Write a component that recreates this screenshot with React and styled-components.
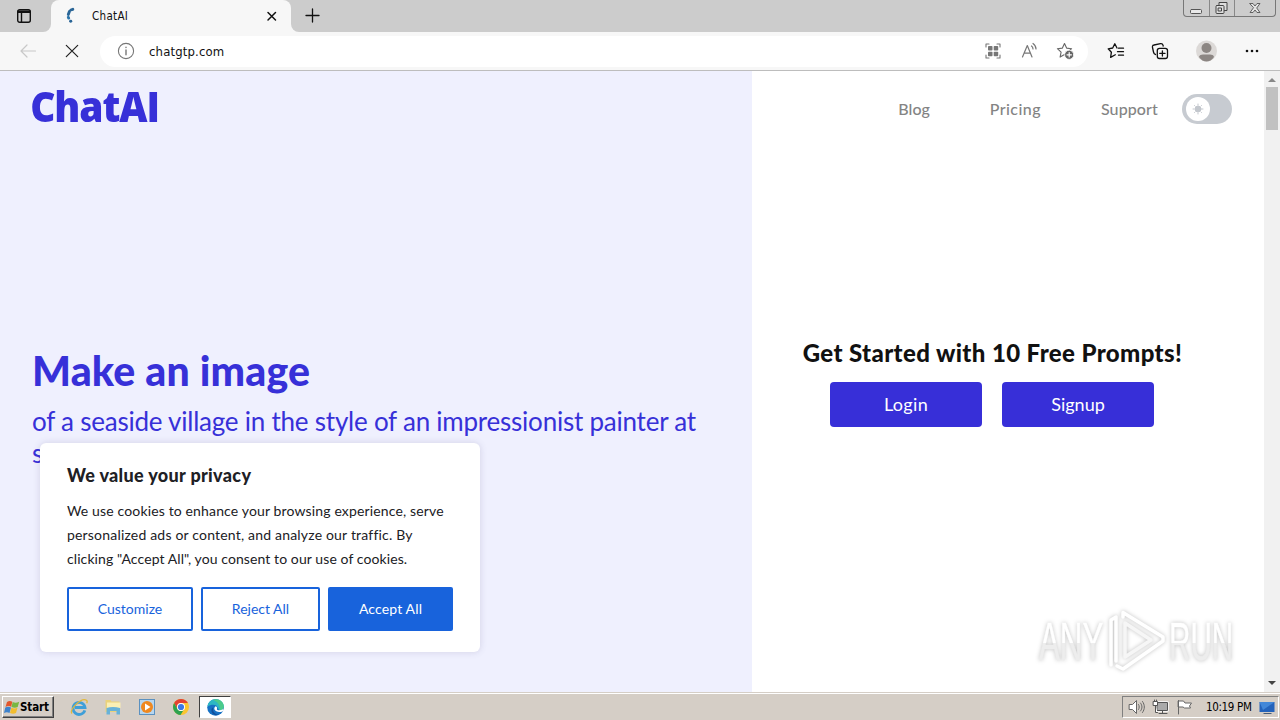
import React from "react";
import styled, { createGlobalStyle } from "styled-components";

const Global = createGlobalStyle`
  * { box-sizing: border-box; }
  html, body { margin: 0; padding: 0; overflow: hidden; }
  button { font: inherit; margin: 0; padding: 0; }
  svg { display: block; flex: none; }
`;

const ui = `"DejaVu Sans Condensed", "DejaVu Sans", sans-serif`;

const Screen = styled.div`
  width: 1280px;
  height: 720px;
  display: flex;
  flex-direction: column;
  font-family: Lato, sans-serif;
  background: #fff;
`;

const TabStrip = styled.header`
  height: 32px;
  flex: none;
  display: flex;
  align-items: stretch;
  background: #f7f7f7;
`;

const TabActions = styled.div`
  width: 51px;
  padding: 8px 0 0 16px;
  background: #cccccc;
  border-radius: 0 0 8px 0;
`;

const TabSlot = styled.div`
  width: 240px;
  background: linear-gradient(#ccc 50%, #f7f7f7 50%);
`;

const Tab = styled.div`
  height: 32px;
  display: flex;
  align-items: center;
  padding: 0 13px 0 15px;
  background: #f7f7f7;
  border-radius: 8px 8px 0 0;
  font: 11.5px ${ui};
  color: #111;
`;

const TabTitle = styled.span`
  flex: 1;
  margin-left: 12px;
  letter-spacing: 0.3px;
`;

const StripRest = styled.div`
  flex: 1;
  display: flex;
  align-items: flex-start;
  padding: 0 4px 0 14px;
  background: #cccccc;
  border-radius: 0 0 0 8px;
`;

const NewTab = styled.div`
  padding-top: 8px;
`;

const WindowControls = styled.div`
  margin-left: auto;
  height: 17px;
  display: flex;
  border: 1px solid #777;
  border-top: 0;
  border-radius: 0 0 4px 4px;
`;

const WindowButton = styled.div`
  width: ${(p) => p.$w}px;
  display: flex;
  align-items: center;
  justify-content: center;
  & + & { border-left: 1px solid #888; }
`;

const Toolbar = styled.div`
  height: 39px;
  flex: none;
  display: flex;
  align-items: center;
  padding: 0 20px 0 19px;
  background: #f7f7f7;
  border-bottom: 1px solid #bdbdbd;
`;

const NavIcons = styled.div`
  width: 81px;
  display: flex;
  gap: 26px;
`;

const AddressBar = styled.div`
  width: 988px;
  height: 31px;
  display: flex;
  align-items: center;
  padding: 0 14px 0 17px;
  border-radius: 16px;
  background: #fff;
  font: 13px ${ui};
  color: #111;
`;

const Address = styled.span`
  flex: 1;
  margin-left: 14px;
  letter-spacing: 0.15px;
`;

const AddressIcons = styled.div`
  display: flex;
  gap: 18px;
`;

const ToolbarIcons = styled.div`
  flex: 1;
  display: flex;
  align-items: center;
  justify-content: space-between;
  padding-left: 19px;
`;

const Viewport = styled.div`
  height: 621px;
  flex: none;
  display: flex;
`;

const Hero = styled.section`
  width: 752px;
  height: 621px;
  padding: 0 32px;
  background: #eff0fe;
  color: #3730d8;
  position: relative;
`;

const Logo = styled.div`
  padding-top: 11px;
  height: 274px;
  width: 200px;
  font: 800 43px/48px "Open Sans", sans-serif;
  letter-spacing: -1.2px;
  transform: scaleX(0.905);
  transform-origin: left top;
  text-indent: -2px;
`;

const HeroTitle = styled.h1`
  margin: 0;
  font-size: 41px;
  font-weight: 900;
  line-height: 52px;
  letter-spacing: 0.15px;
  white-space: nowrap;
`;

const HeroText = styled.p`
  margin: 8px 0 0;
  font-size: 26px;
  line-height: 32px;
  letter-spacing: -0.23px;
  white-space: nowrap;
`;

const Consent = styled.aside`
  position: absolute;
  left: 40px;
  top: 372px;
  width: 440px;
  height: 209px;
  padding: 19px 27px 21px;
  border-radius: 6px;
  background: #fff;
  box-shadow: 0 0 7px rgba(90, 80, 130, 0.2);
  color: #202024;
`;

const ConsentTitle = styled.h2`
  margin: 0 0 11px;
  font-size: 18px;
  line-height: 26px;
  font-weight: 900;
  letter-spacing: 0.33px;
  white-space: nowrap;
`;

const ConsentLine = styled.div`
  font-size: 14px;
  line-height: 24px;
  white-space: nowrap;
  letter-spacing: ${(p) => p.$track || "0"};
`;

const ConsentButtons = styled.div`
  display: flex;
  gap: 8px;
  margin-top: 16px;
`;

const ConsentButton = styled.button`
  width: ${(p) => p.$w}px;
  height: 44px;
  padding-bottom: 2px;
  border: 2px solid #1863dc;
  border-radius: 2px;
  background: ${(p) => (p.$primary ? "#1863dc" : "#fff")};
  color: ${(p) => (p.$primary ? "#fff" : "#1863dc")};
  font-size: 14px;
  letter-spacing: ${(p) => p.$track || "0"};
`;

const Panel = styled.section`
  width: 512px;
  display: flex;
  flex-direction: column;
`;

const SiteNav = styled.nav`
  height: 76px;
  display: flex;
  align-items: center;
  justify-content: flex-end;
  padding-right: 32px;
  font-size: 16px;
  font-weight: 500;
  color: #848484;
`;

const SiteLink = styled.a`
  margin-right: ${(p) => p.$gap}px;
  padding-bottom: 2px;
  letter-spacing: ${(p) => p.$track || "0"};
`;

const Toggle = styled.div`
  width: 50px;
  height: 30px;
  padding: 3px 4px;
  border-radius: 15px;
  background: #c7cbd1;
`;

const Knob = styled.div`
  width: 24px;
  height: 24px;
  display: grid;
  place-items: center;
  border-radius: 50%;
  background: #fff;
`;

const SignIn = styled.div`
  display: flex;
  flex-direction: column;
  align-items: center;
  padding: 190px 32px 0 0;
`;

const PanelTitle = styled.h2`
  margin: 0 0 13px;
  font-size: 24px;
  line-height: 32px;
  font-weight: 900;
  color: #111;
  white-space: nowrap;
  letter-spacing: 0.39px;
  padding-left: 1px;
`;

const PanelButtons = styled.div`
  display: flex;
  gap: 20px;
`;

const PanelButton = styled.button`
  width: 152px;
  height: 45px;
  padding-bottom: 1px;
  border: 0;
  border-radius: 4px;
  background: #372fd8;
  color: #fff;
  font-size: 18px;
  letter-spacing: ${(p) => p.$track || "0"};
`;

const Scrollbar = styled.div`
  width: 16px;
  display: flex;
  flex-direction: column;
  align-items: center;
  padding: 6px 0;
  background: #f1f1f1;
`;

const Thumb = styled.div`
  width: 12px;
  height: 43px;
  margin: 5px 1px auto 0;
  background: #c1c1c1;
`;

const Watermark = styled.div`
  position: absolute;
  left: 1039px;
  top: 606px;
  display: flex;
  align-items: center;
  color: #fff;
  font: 400 53px/68px "Liberation Sans", sans-serif;
  filter: drop-shadow(0 0 2px rgba(0, 0, 0, 0.25));
`;

const MarkWord = styled.span`
  width: ${(p) => p.$w}px;
  margin-right: ${(p) => p.$pull}px;
  padding-top: 2px;
  white-space: nowrap;
  transform: scaleX(${(p) => p.$scale});
  transform-origin: left center;
  background: linear-gradient(#fff 53%, #ededed 53%);
  background-clip: text;
  -webkit-text-stroke: 0.6px transparent;
  color: transparent;
`;

const Taskbar = styled.footer`
  height: 28px;
  flex: none;
  display: flex;
  align-items: center;
  padding: 2px 1px 1px 2px;
  background: #d5cec6;
  border-top: 1px solid #d5cec6;
  box-shadow: inset 0 1px #fff;
`;

const StartButton = styled.button`
  width: 52px;
  height: 22px;
  display: flex;
  align-items: center;
  padding-left: 1px;
  border: 1px solid;
  border-color: #fff #404040 #404040 #fff;
  box-shadow: inset -1px -1px #808080;
  background: #d5cec6;
  font: bold 11.5px ${ui};
  letter-spacing: -0.1px;
  color: #000;
`;

const Launchers = styled.div`
  display: flex;
  align-items: center;
  gap: 16px;
  margin-left: 16px;
`;

const ActiveApp = styled.div`
  width: 32px;
  height: 22px;
  margin-left: 9px;
  display: grid;
  place-items: center;
  background: #fff;
  border: 1px solid;
  border-color: #404040 #fff #fff #404040;
`;

const Tray = styled.div`
  width: 157px;
  height: 22px;
  margin-left: auto;
  display: flex;
  align-items: center;
  gap: 7px;
  padding: 0 3px 0 5px;
  border: 1px solid;
  border-color: #808080 #fff #fff #808080;
  font: 11.5px ${ui};
  color: #000;
`;

const Clock = styled.time`
  flex: 1;
  margin-left: 6px;
  white-space: nowrap;
  letter-spacing: -0.35px;
`;

const Icon = ({ w = 18, h = w, color = "#222", sw = 1.2, children }) => (
  <svg width={w} height={h} viewBox={`0 0 ${w} ${h}`} fill="none" stroke={color} strokeWidth={sw} strokeLinecap="round" strokeLinejoin="round">
    {children}
  </svg>
);

const star = "M8.5 1.5l2.1 4.6 5 .6-3.7 3.4 1 5-4.4-2.5-4.4 2.5 1-5L1.4 6.7l5-.6z";

const EdgeLogo = () => (
  <svg width="17" height="17" viewBox="0 0 17 17">
    <circle cx="8.5" cy="8.5" r="8.3" fill="#1671c4" />
    <path d="M.4 7.5C1 3 4.4.2 8.6.2c4.9 0 8.2 3.5 8.2 7.2 0 2.6-1.9 4-4.300 4l-2.200-3.500C9.600 5.500 4.500 4.800.4 7.500z" fill="#2db7c4" />
    <path d="M8.600.2c4.900 0 8.200 3.500 8.200 7.200 0 2.600-1.900 4-4.300 4C14 7 11 3 6 .7A8 8 0 0 1 8.600.2z" fill="#4ccb8b" />
    <path d="M6.200 8.500c-1 3 1.200 7 5.700 7.300-4.400 1.500-8-1.500-7.400-5.300.2-1 .8-1.600 1.700-2z" fill="#124f9b" />
    <path d="M8.600 7.200c1.500.6 1.800 2 1.300 2.800-.3 1.200 3 2 6 .3l1.100 1.200c-2.700 2.300-8.300 2-9.500-.9-.5-1.300 0-2.700 1.100-3.400z" fill="#fff" />
  </svg>
);

export default function App() {
  return (
    <Screen>
      <Global />
      <TabStrip>
        <TabActions>
          <Icon w={16} color="#111" sw={1.4}>
            <rect x="1.7" y="1.7" width="12.6" height="12.6" rx="2" />
            <path d="M2 3.2h12M2 4.4h12M5.5 5v9" />
          </Icon>
        </TabActions>
        <TabSlot>
          <Tab>
            <Icon w={14} h={18} color="#2a6596" sw={2.9}>
              <path d="M6.8 2.3L4.8 3M3.4 4.6L2.300 7.500" />
              <path d="M2.300 10.300l.4.8" stroke="#2c75ac" />
              <path d="M4.600 14.300h.2" />
            </Icon>
            <TabTitle>ChatAI</TabTitle>
            <Icon w={12} color="#111" sw={1.500}><path d="M2 2.500l7.500 7.500m0-7.500L2 10" /></Icon>
          </Tab>
        </TabSlot>
        <StripRest>
          <NewTab>
            <Icon w={16} color="#111" sw={1.300}><path d="M7.500 1v13M1 7.500h13" /></Icon>
          </NewTab>
          <WindowControls>
            <WindowButton $w={25}>
              <Icon w={13} h={15} color="#555" sw={1}><rect x="0.500" y="8.500" width="11" height="4" rx="1" fill="#e8e8e8" /></Icon>
            </WindowButton>
            <WindowButton $w={25}>
              <Icon w={14} h={14} color="#444" sw={1}>
                <path d="M4 4V1.500h8v8H9.500" fill="#ddd" />
                <rect x="1" y="4.500" width="8" height="8" rx="1" fill="#ddd" />
                <rect x="3.500" y="7" width="3" height="3" />
              </Icon>
            </WindowButton>
            <WindowButton $w={41}>
              <Icon w={13} h={12} color="#555" sw={0.9}><path d="M1 1.500h3l2 2.500 2-2.500h3L7.700 6l3.300 4.500H8L6 8l-2 2.500H1L4.300 6z" fill="#e4e4e4" /></Icon>
            </WindowButton>
          </WindowControls>
        </StripRest>
      </TabStrip>

      <Toolbar>
        <NavIcons>
          <Icon w={18} color="#c8c8c8" sw={1.200}><path d="M16.500 9H2M8 3L2 9l6 6" /></Icon>
          <Icon w={18} color="#222" sw={1.200}><path d="M3.300 3.300l11.400 11.400m0-11.400L3.300 14.700" /></Icon>
        </NavIcons>
        <AddressBar>
          <Icon w={18} color="#777" sw={1.100}><circle cx="9" cy="9" r="7.600" /><path d="M9 8v4.800M9 5.200v.3" strokeWidth="1.400" /></Icon>
          <Address>chatgtp.com</Address>
          <AddressIcons>
            <Icon w={18} color="#777" sw={1.100}>
              <path d="M2 5V2h3M13 2h3v3M16 13v3h-3M5 16H2v-3" />
              <g fill="#777" stroke="none"><rect x="4" y="4" width="4.500" height="4.500" rx=".8" /><rect x="9.700" y="4" width="4.500" height="4.500" rx=".8" /><rect x="4" y="9.700" width="4.500" height="4.500" rx=".8" /><rect x="9.700" y="9.700" width="4.500" height="4.500" rx=".8" /></g>
            </Icon>
            <Icon w={18} color="#777" sw={1.200}><path d="M2.500 15L7.300 3.500 12 15M4 11.200h6.500M11.500 4c1 .7 1.500 1.800 1.500 3M13 1.500c1.800 1.300 3 3.300 3 5.500" /></Icon>
            <Icon w={18} color="#666" sw={1.100}>
              <path d={star} />
              <circle cx="13.200" cy="12.800" r="4.600" fill="#666" stroke="#fff" strokeWidth=".8" />
              <path d="M13.200 10.600V15M11 12.800h4.400" stroke="#fff" strokeWidth="1.200" />
            </Icon>
          </AddressIcons>
        </AddressBar>
        <ToolbarIcons>
          <Icon w={18} color="#111" sw={1.300}><path d="M10 6L7.800 1.800 5.700 6 1.200 6.800l3.200 3.400-.8 5.200 4.700-2.600M11.500 6.200h5M10.500 9.700h6M11.500 13.200h5" /></Icon>
          <Icon w={18} color="#111" sw={1.300}>
            <path d="M4.500 12.500C3 12.300 2.800 11.500 2.500 10L1.500 5.500C1.200 4 1.800 3.200 3 3l6.500-1.400c1.300-.2 2.200.4 2.500 1.600l.2.800" />
            <rect x="6.300" y="6.300" width="10.200" height="10.200" rx="2.200" /><path d="M11.400 8.800v5.200M8.800 11.400H14" />
          </Icon>
          <Icon w={22} sw={0}><circle cx="10.500" cy="11" r="10.500" fill="#dcd9d7" /><circle cx="10.500" cy="8" r="5" fill="#8c8683" /><path d="M3 17c.5-2 2-2.600 4-2.600h7c2 0 3.500.6 4 2.600C14 23 7 23 3 17z" fill="#8c8683" /></Icon>
          <Icon w={16} h={6} sw={0}><g fill="#111"><circle cx="3" cy="3" r="1.300" /><circle cx="8" cy="3" r="1.300" /><circle cx="13" cy="3" r="1.300" /></g></Icon>
        </ToolbarIcons>
      </Toolbar>

      <Viewport>
        <Hero>
          <Logo>ChatAI</Logo>
          <HeroTitle>Make an image</HeroTitle>
          <HeroText>of a seaside village in the style of an impressionist painter at<br />sunset</HeroText>
          <Consent>
            <ConsentTitle>We value your privacy</ConsentTitle>
            <ConsentLine $track="0.145px">We use cookies to enhance your browsing experience, serve</ConsentLine>
            <ConsentLine $track="0.19px">personalized ads or content, and analyze our traffic. By</ConsentLine>
            <ConsentLine $track="0.09px">clicking "Accept All", you consent to our use of cookies.</ConsentLine>
            <ConsentButtons>
              <ConsentButton $w={126}>Customize</ConsentButton>
              <ConsentButton $w={119}>Reject All</ConsentButton>
              <ConsentButton $w={125} $track="0.15px" $primary>Accept All</ConsentButton>
            </ConsentButtons>
          </Consent>
        </Hero>
        <Panel>
          <SiteNav>
            <SiteLink $gap={60}>Blog</SiteLink>
            <SiteLink $gap={60} $track="0.42px">Pricing</SiteLink>
            <SiteLink $gap={24} $track="0.12px">Support</SiteLink>
            <Toggle><Knob><Icon w={12} color="#c3c7cd" sw={1}><circle cx="6" cy="6" r="3" fill="#c3c7cd" /><path d="M6 1v1M6 10v1M1 6h1M10 6h1M2.500 2.500l.5.5M9 9l.5.5M9.500 2.500L9 3M3 9l-.5.5" /></Icon></Knob></Toggle>
          </SiteNav>
          <SignIn>
            <PanelTitle>Get Started with 10 Free Prompts!</PanelTitle>
            <PanelButtons>
              <PanelButton $track="0.35px">Login</PanelButton>
              <PanelButton>Signup</PanelButton>
            </PanelButtons>
          </SignIn>
        </Panel>
        <Scrollbar>
          <Icon w={8} h={5} sw={0}><path d="M0 5l4-4 4 4z" fill="#888" /></Icon>
          <Thumb />
          <Icon w={8} h={5} sw={0}><path d="M0 0l4 4 4-4z" fill="#444" /></Icon>
        </Scrollbar>
      </Viewport>

      <Watermark>
        <MarkWord $w={112} $pull={-44} $scale={0.59}>ANY</MarkWord>
        <Icon w={62} h={68} color="#fff" sw={3.500}>
          <path d="M16 10V5.500l40 24.500v4L16 62l-6-3" /><path d="M18 16v34l26-17z" stroke="#f6f6f6" /><path d="M4 58V13l5-3v44" />
        </Icon>
        <MarkWord $w={118} $pull={-50} $scale={0.56}>RUN</MarkWord>
      </Watermark>

      <Taskbar>
        <StartButton>
          <svg width="16" height="17" viewBox="0 0 16 16">
            <path d="M3 2.500c2-1.500 3.500-1.300 5.300-.3L7.200 7.300C5.500 6.300 3.500 6.300 1.500 7.400z" fill="#e2572b" />
            <path d="M8.700 2.500c2 1 4 .9 6.500-.3l-1.500 5.300c-2 1.100-4 1-6.200 0z" fill="#78b742" />
            <path d="M1.300 8c1.900-1 3.900-1 5.700-.1l-1.500 5.500c-1.700-.9-3.700-.9-5.500.1z" fill="#3d82cc" />
            <path d="M7.400 8.200c2 1 4 1 6.100 0l-1.500 5.300c-2 1.100-4 1-6 0z" fill="#f2bd2e" />
          </svg>
          Start
        </StartButton>
        <Launchers>
          <svg width="18" height="18" viewBox="0 0 18 18" fill="none">
            <path d="M14.800 12.300A6 6 0 1 1 15 9.500H5" stroke="#3f9fd8" strokeWidth="2.800" />
            <path d="M2 15.500C-1 12 11-1 16.500 2.200c1 .8.700 2 .2 3" stroke="#e2b83c" strokeWidth="1.300" />
          </svg>
          <svg width="18" height="18" viewBox="0 0 18 18">
            <path d="M1.500 2h5l1 1.500h8V14h-14z" fill="#ead27b" /><path d="M3 4.500h13.500V10H3z" fill="#faefb4" />
            <path d="M2.500 10c4-1.500 9-1.500 13.500 0v6.500h-3.500V13H6v3.500H2.500z" fill="#68b2d8" />
          </svg>
          <svg width="18" height="18" viewBox="0 0 18 18">
            <rect x="1.500" y="1.500" width="15" height="15" fill="#b7d6ef" stroke="#5b91c0" />
            <circle cx="9" cy="9" r="6" fill="#ef8820" /><path d="M7 5.500l5.500 3.500L7 12.500z" fill="#fff" />
          </svg>
          <svg width="18" height="18" viewBox="0 0 18 18">
            <circle cx="9" cy="9" r="8" fill="#fbc52f" />
            <path d="M2.100 5a8 8 0 0 1 13.800 0H9a4 4 0 0 0-3.500 6z" fill="#e34133" />
            <path d="M2.100 5a8 8 0 0 0 6.400 12l3.300-5.200A4 4 0 0 1 5.500 11z" fill="#2da250" />
            <circle cx="9" cy="9" r="4" fill="#fff" /><circle cx="9" cy="9" r="3.100" fill="#3b78e7" />
          </svg>
        </Launchers>
        <ActiveApp><EdgeLogo /></ActiveApp>
        <Tray>
          <Icon w={17} h={16} color="#666" sw={1}><path d="M1.500 5.500h3l4-4v13l-4-4h-3z" fill="#fff" /><path d="M10.500 5.500c1 1.500 1 3.500 0 5M12.500 4c2 2.500 2 5.500 0 8M14.500 2.500c2.500 3.500 2.500 7.500 0 11" /></Icon>
          <Icon w={17} h={16} color="#555" sw={1}><rect x="5.500" y="3.500" width="10" height="8" fill="#aaa" stroke="#fff" strokeWidth="2.500" /><rect x="5.500" y="3.500" width="10" height="8" fill="#aaa" /><path d="M7 14.500h8M10.500 12v2.500" /><path d="M1.500 2.500h4v4h-4zM2.500 1v1.500M4.500 1v1.500M3.500 6.500v7h2" fill="#fff" /></Icon>
          <Icon w={17} h={16} color="#666" sw={1}><path d="M2.500 1.500v13.500M2.500 2h5l1.500 2h6.500l-2 3 1 2H8.500L7 8H2.500z" fill="#fff" /></Icon>
          <Clock>10:19 PM</Clock>
          <Icon w={16} h={15} sw={0}><path d="M.5 2h15v10H.5z" fill="#2463bb" /><path d="M.5 2h15L4 10z" fill="#4287d8" /><path d="M5 13h7l1 1H4z" fill="#465c77" /></Icon>
        </Tray>
      </Taskbar>
    </Screen>
  );
}
